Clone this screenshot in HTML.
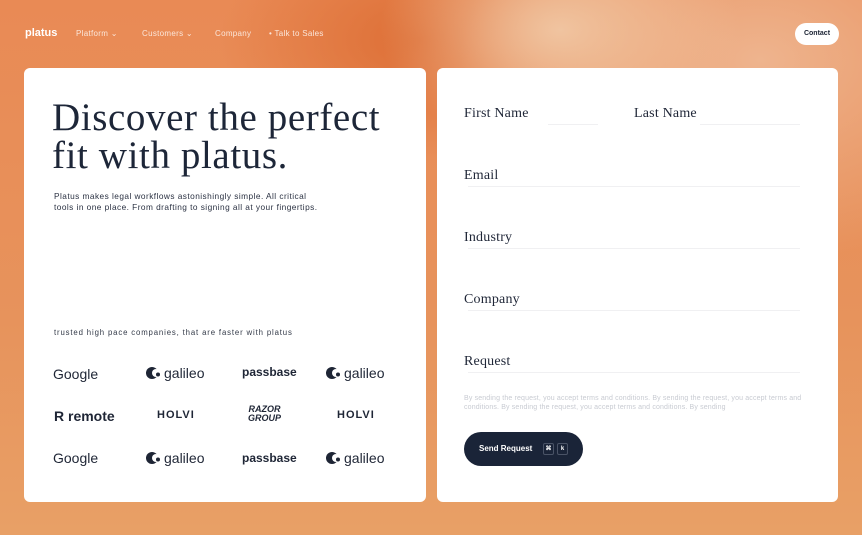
<!DOCTYPE html>
<html><head><style>
*{margin:0;padding:0;box-sizing:border-box}
body{width:862px;height:535px;overflow:hidden;position:relative;font-family:"Liberation Sans",sans-serif;
background:radial-gradient(ellipse 180px 120px at 560px 30px,#f0c4a0 0%,rgba(240,196,160,0) 100%),
radial-gradient(ellipse 300px 200px at 760px 60px,#eeb48e 0%,rgba(238,180,142,0) 100%),
radial-gradient(ellipse 200px 120px at 420px 40px,#dd6e35 0%,rgba(221,110,53,0) 100%),
linear-gradient(180deg,#e98a55 0%,#e7935c 60%,#e8a066 100%);}
.nav{position:absolute;top:0;left:0;width:862px;height:68px;color:#fff}
.logo{position:absolute;left:25px;top:27px;font-weight:bold;font-size:11px}
.ni{position:absolute;top:29px;font-size:8px;letter-spacing:0.3px;color:#fbe6da}
.contact{position:absolute;left:795px;top:23px;width:44px;height:22px;border-radius:11px;background:#fff;color:#1a2233;font-size:7px;font-weight:bold;text-align:center;line-height:22px}
.card{position:absolute;top:68px;height:434px;background:#fff;border-radius:6px}
h1{position:absolute;left:52px;top:99px;font-family:"Liberation Serif",serif;font-weight:normal;font-size:39px;line-height:38px;color:#1d2638;letter-spacing:0.6px}
.sub{position:absolute;left:54px;top:191px;font-size:8.3px;line-height:11px;letter-spacing:0.45px;color:#2a3142}
.tr{position:absolute;left:54px;top:328px;font-size:7.8px;letter-spacing:0.85px;color:#333a48}
.lg{position:absolute;font-size:14px;color:#1e2535;white-space:nowrap}
.b{font-weight:bold}
.ic{display:inline-block;vertical-align:-2px;margin-right:4px}
.lab{position:absolute;font-family:"Liberation Serif",serif;font-size:14px;letter-spacing:0.2px;color:#1f2637}
.ln{position:absolute;height:1px;background:#f0f0f2}
.terms{position:absolute;left:464px;top:394px;width:345px;font-size:7px;line-height:9px;letter-spacing:0.15px;color:#c8cbd2}
.btn{position:absolute;left:464px;top:432px;width:119px;height:34px;border-radius:17px;background:#1a2438;color:#fff;font-size:8px;font-weight:bold;line-height:34px;padding-left:15px}
.k{position:absolute;top:11px;width:11px;height:12px;border:1px solid #4a5366;border-radius:2px;font-size:6px;line-height:10px;text-align:center}
</style></head><body>
<div class="nav">
<div class="logo">platus</div>
<div class="ni" style="left:76px">Platform ⌄</div>
<div class="ni" style="left:142px">Customers ⌄</div>
<div class="ni" style="left:215px">Company</div>
<div class="ni" style="left:269px">• Talk to Sales</div>
<div class="contact">Contact</div>
</div>
<div class="card" style="left:24px;width:402px"></div>
<div class="card" style="left:437px;width:401px"></div>
<h1>Discover the perfect<br>fit with platus.</h1>
<div class="sub">Platus makes legal workflows astonishingly simple. All critical<br>tools in one place. From drafting to signing all at your fingertips.</div>
<div class="tr">trusted high pace companies, that are faster with platus</div>

<div class="lg" style="left:53px;top:366px">Google</div>
<div class="lg" style="left:146px;top:365px"><svg class="ic" width="14" height="14" viewBox="0 0 14 14"><circle cx="6" cy="7" r="6" fill="#1e2535"/><circle cx="10" cy="7" r="4" fill="#fff"/><circle cx="12" cy="8.5" r="2" fill="#1e2535"/></svg>galileo</div>
<div class="lg b" style="left:242px;top:365px;font-size:12px">passbase</div>
<div class="lg" style="left:326px;top:365px"><svg class="ic" width="14" height="14" viewBox="0 0 14 14"><circle cx="6" cy="7" r="6" fill="#1e2535"/><circle cx="10" cy="7" r="4" fill="#fff"/><circle cx="12" cy="8.5" r="2" fill="#1e2535"/></svg>galileo</div>
<div class="lg b" style="left:54px;top:408px">R remote</div>
<div class="lg b" style="left:157px;top:409px;font-size:11px;letter-spacing:1px">HOLVI</div>
<div class="lg b" style="left:248px;top:405px;font-size:9px;line-height:9px;font-style:italic;text-align:center">RAZOR<br>GROUP</div>
<div class="lg b" style="left:337px;top:409px;font-size:11px;letter-spacing:1px">HOLVI</div>
<div class="lg" style="left:53px;top:450px">Google</div>
<div class="lg" style="left:146px;top:450px"><svg class="ic" width="14" height="14" viewBox="0 0 14 14"><circle cx="6" cy="7" r="6" fill="#1e2535"/><circle cx="10" cy="7" r="4" fill="#fff"/><circle cx="12" cy="8.5" r="2" fill="#1e2535"/></svg>galileo</div>
<div class="lg b" style="left:242px;top:451px;font-size:12px">passbase</div>
<div class="lg" style="left:326px;top:450px"><svg class="ic" width="14" height="14" viewBox="0 0 14 14"><circle cx="6" cy="7" r="6" fill="#1e2535"/><circle cx="10" cy="7" r="4" fill="#fff"/><circle cx="12" cy="8.5" r="2" fill="#1e2535"/></svg>galileo</div>

<div class="lab" style="left:464px;top:106px">First Name</div>
<div class="ln" style="left:548px;top:124px;width:50px"></div>
<div class="lab" style="left:634px;top:106px">Last Name</div>
<div class="ln" style="left:700px;top:124px;width:100px"></div>
<div class="lab" style="left:464px;top:168px">Email</div>
<div class="ln" style="left:468px;top:186px;width:332px"></div>
<div class="lab" style="left:464px;top:230px">Industry</div>
<div class="ln" style="left:468px;top:248px;width:332px"></div>
<div class="lab" style="left:464px;top:292px">Company</div>
<div class="ln" style="left:468px;top:310px;width:332px"></div>
<div class="lab" style="left:464px;top:354px">Request</div>
<div class="ln" style="left:468px;top:372px;width:332px"></div>
<div class="terms">By sending the request, you accept terms and conditions. By sending the request, you accept terms and conditions. By sending the request, you accept terms and conditions. By sending</div>
<div class="btn">Send Request<span class="k" style="left:79px">⌘</span><span class="k" style="left:93px">k</span></div>
</body></html>
